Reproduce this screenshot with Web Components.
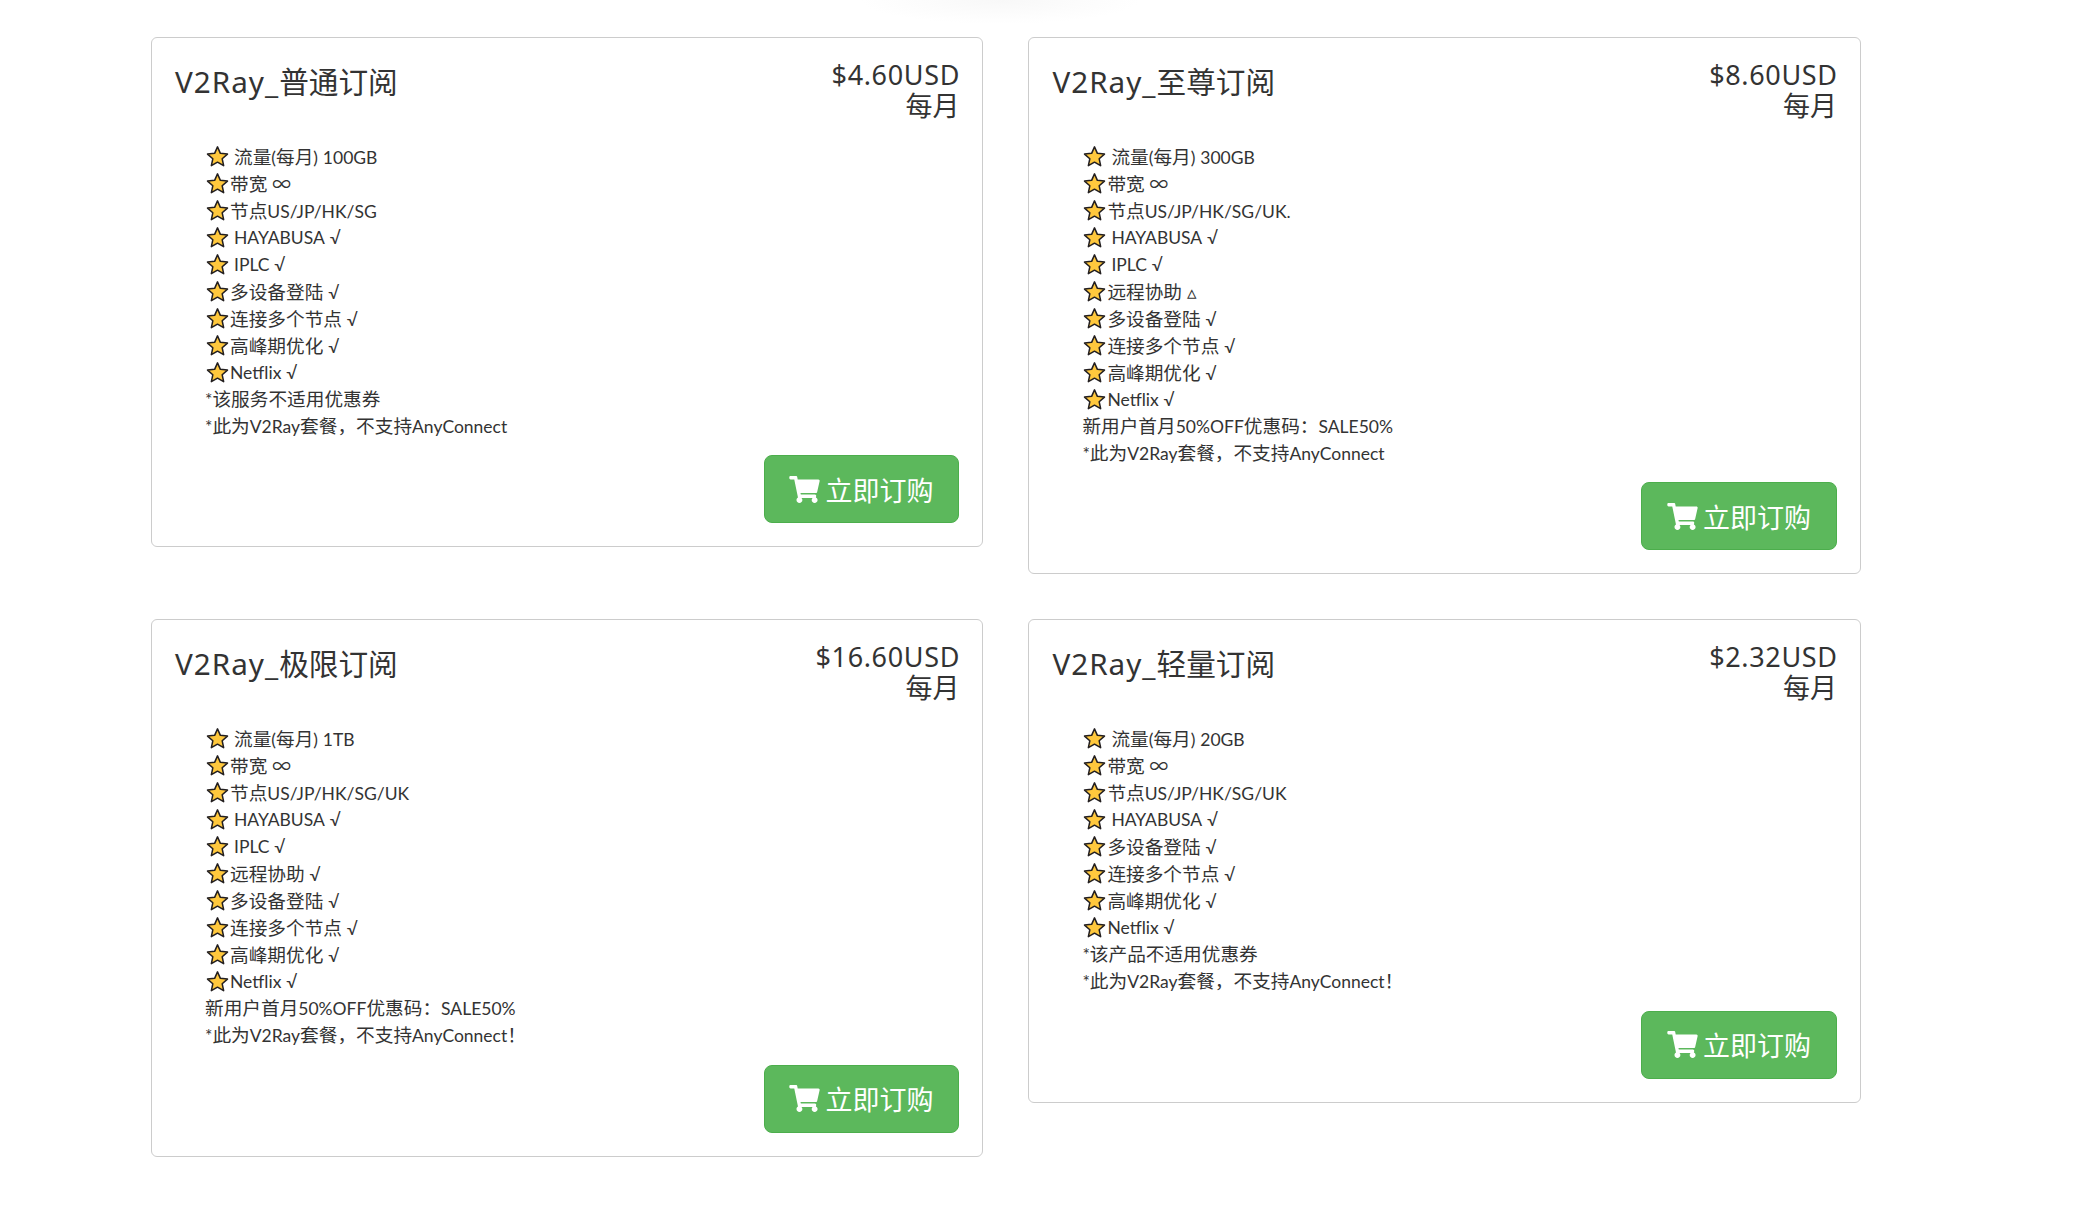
<!DOCTYPE html>
<html lang="zh">
<head>
<meta charset="utf-8">
<title>V2Ray</title>
<style>
  body {
    margin: 0;
    background: #fff;
    font-family: "Noto Sans", "Noto Sans CJK SC", sans-serif;
    color: #333;
  }
</style>
</head>
<body>
<plan-grid>
  <plan-card name="普通订阅" price="$4.60USD">
    <plan-feature spaced>流量(每月) 100GB</plan-feature>
    <plan-feature>带宽 ∞</plan-feature>
    <plan-feature>节点US/JP/HK/SG</plan-feature>
    <plan-feature spaced>HAYABUSA √</plan-feature>
    <plan-feature spaced>IPLC √</plan-feature>
    <plan-feature>多设备登陆 √</plan-feature>
    <plan-feature>连接多个节点 √</plan-feature>
    <plan-feature>高峰期优化 √</plan-feature>
    <plan-feature>Netflix √</plan-feature>
    <plan-note>*该服务不适用优惠券</plan-note>
    <plan-note>*此为V2Ray套餐，不支持AnyConnect</plan-note>
  </plan-card>
  <plan-card name="至尊订阅" price="$8.60USD">
    <plan-feature spaced>流量(每月) 300GB</plan-feature>
    <plan-feature>带宽 ∞</plan-feature>
    <plan-feature>节点US/JP/HK/SG/UK.</plan-feature>
    <plan-feature spaced>HAYABUSA √</plan-feature>
    <plan-feature spaced>IPLC √</plan-feature>
    <plan-feature>远程协助 ▵</plan-feature>
    <plan-feature>多设备登陆 √</plan-feature>
    <plan-feature>连接多个节点 √</plan-feature>
    <plan-feature>高峰期优化 √</plan-feature>
    <plan-feature>Netflix √</plan-feature>
    <plan-note>新用户首月50%OFF优惠码：SALE50%</plan-note>
    <plan-note>*此为V2Ray套餐，不支持AnyConnect</plan-note>
  </plan-card>
  <plan-card name="极限订阅" price="$16.60USD">
    <plan-feature spaced>流量(每月) 1TB</plan-feature>
    <plan-feature>带宽 ∞</plan-feature>
    <plan-feature>节点US/JP/HK/SG/UK</plan-feature>
    <plan-feature spaced>HAYABUSA √</plan-feature>
    <plan-feature spaced>IPLC √</plan-feature>
    <plan-feature>远程协助 √</plan-feature>
    <plan-feature>多设备登陆 √</plan-feature>
    <plan-feature>连接多个节点 √</plan-feature>
    <plan-feature>高峰期优化 √</plan-feature>
    <plan-feature>Netflix √</plan-feature>
    <plan-note>新用户首月50%OFF优惠码：SALE50%</plan-note>
    <plan-note>*此为V2Ray套餐，不支持AnyConnect！</plan-note>
  </plan-card>
  <plan-card name="轻量订阅" price="$2.32USD">
    <plan-feature spaced>流量(每月) 20GB</plan-feature>
    <plan-feature>带宽 ∞</plan-feature>
    <plan-feature>节点US/JP/HK/SG/UK</plan-feature>
    <plan-feature spaced>HAYABUSA √</plan-feature>
    <plan-feature>多设备登陆 √</plan-feature>
    <plan-feature>连接多个节点 √</plan-feature>
    <plan-feature>高峰期优化 √</plan-feature>
    <plan-feature>Netflix √</plan-feature>
    <plan-note>*该产品不适用优惠券</plan-note>
    <plan-note>*此为V2Ray套餐，不支持AnyConnect！</plan-note>
  </plan-card>
</plan-grid>

<script>
// latin runs in the list are set smaller than the chinese around them
const listTextStyles = `
  ::slotted(.en) {
    font-family: Lato, sans-serif;
    font-size: 17.5px;
  }
`

function wrapLatin(host) {
  const holder = document.createElement('div')
  holder.innerHTML = host.innerHTML.replace(/[\x21-\x7e√]+/g, m => `<span class="en">${m}</span>`)
  host.replaceChildren(...holder.childNodes)
}

class PlanGrid extends HTMLElement {
  constructor() {
    super()
    this.attachShadow({ mode: 'open' }).innerHTML = `
      <style>
        :host {
          display: grid;
          position: relative;
          grid-template-columns: 832.4px 832.6px;
          column-gap: 45px;
          row-gap: 45px;
          align-items: start;
          padding: 37px 0 68px 151px;
        }

        /* faint shadow of the bar above, cut off by the top edge */
        :host::before {
          content: '';
          position: absolute;
          top: 0;
          left: 860px;
          width: 280px;
          height: 24px;
          background: radial-gradient(ellipse 140px 24px at 50% 0, #f8f8f8, #fff);
        }
      </style>
      <slot></slot>
    `
  }
}

class PlanCard extends HTMLElement {
  constructor() {
    super()
    this.attachShadow({ mode: 'open' })
  }

  connectedCallback() {
    this.render()
  }

  render() {
    this.shadowRoot.innerHTML = `
      <style>
        :host {
          display: block;
          position: relative;
          box-sizing: border-box;
          border: 1px solid #ccc;
          border-radius: 6px;
          padding: 23px;
        }

        header {
          display: flex;
          justify-content: space-between;
          align-items: flex-start;
          height: 80.5px;
        }

        h2 {
          margin: 0;
          font-size: 29.67px;
          font-weight: 400;
          line-height: 41px;
        }

        h2 span {
          letter-spacing: 1px;
        }

        .price {
          margin-top: -2px;
          font-size: 27px;
          line-height: 31px;
          text-align: right;
        }

        .amount {
          margin-right: -0.65px;
          letter-spacing: 0.65px;
        }

        .list {
          padding-left: 30px;
        }

        footer {
          display: flex;
          justify-content: flex-end;
          margin-top: 16.3px;
        }
      </style>
      <header>
        <h2><span>V2Ray_</span>${this.getAttribute('name')}</h2>
        <div class="price">
          <div class="amount">${this.getAttribute('price')}</div>
          <div>每月</div>
        </div>
      </header>
      <div class="list"><slot></slot></div>
      <footer><order-button>立即订购</order-button></footer>
    `
  }
}

class PlanFeature extends HTMLElement {
  constructor() {
    super()
    this.attachShadow({ mode: 'open' }).innerHTML = `
      <style>
        :host {
          display: flex;
          align-items: center;
          height: 27.05px;
          font-size: 18.67px;
          white-space: pre;
        }

        :host([spaced]) span {
          padding-left: 4px;
        }

        svg {
          width: 23px;
          height: 23px;
          margin: 2px 1px 0;
          flex: none;
        }

        ${listTextStyles}
      </style>
      <svg viewBox="0 0 24 24">
        <path d="M12 2 L15 8.7 L22.4 9.5 L16.9 14.4 L18.4 21.6 L12 17.9 L5.6 21.6 L7.1 14.4 L1.6 9.5 L9 8.7 Z"
          fill="#ffc83d" stroke="#231f20" stroke-width="1.6" stroke-linejoin="round"/>
      </svg>
      <span><slot></slot></span>
    `
  }

  connectedCallback() {
    wrapLatin(this)
  }
}

class PlanNote extends HTMLElement {
  constructor() {
    super()
    this.attachShadow({ mode: 'open' }).innerHTML = `
      <style>
        :host {
          display: block;
          height: 27.05px;
          line-height: 27px;
          font-size: 18.67px;
        }

        ${listTextStyles}
      </style>
      <slot></slot>
    `
  }

  connectedCallback() {
    wrapLatin(this)
  }
}

class OrderButton extends HTMLElement {
  constructor() {
    super()
    this.attachShadow({ mode: 'open' }).innerHTML = `
      <style>
        :host {
          display: inline-flex;
          align-items: center;
          justify-content: center;
          gap: 5px;
          box-sizing: border-box;
          width: 195.8px;
          height: 68px;
          background: #5cb85c;
          border: 1px solid #4cae4c;
          border-radius: 8px;
          color: #fff;
          font-size: 27px;
        }

        svg {
          width: 31px;
          height: 27px;
          fill: #fff;
        }
      </style>
      <svg viewBox="0 0 576 512">
        <path d="M528.12 301.319l47.273-208C578.806 78.301 567.391 64 551.99 64H159.208l-9.166-44.81C147.758 8.021 137.93 0 126.529 0H24C10.745 0 0 10.745 0 24v16c0 13.255 10.745 24 24 24h69.883l70.248 343.435C147.325 417.1 136 435.222 136 456c0 30.928 25.072 56 56 56s56-25.072 56-56c0-15.674-6.447-29.835-16.824-40h209.647C430.447 426.165 424 440.326 424 456c0 30.928 25.072 56 56 56s56-25.072 56-56c0-22.172-12.888-41.332-31.579-50.405l5.517-24.276c3.413-15.018-8.002-29.319-23.403-29.319H218.117l-6.545-32h293.145c11.206 0 20.92-7.754 23.403-18.681z"/>
      </svg>
      <span><slot></slot></span>
    `
  }
}

customElements.define('plan-grid', PlanGrid)
customElements.define('plan-card', PlanCard)
customElements.define('plan-feature', PlanFeature)
customElements.define('plan-note', PlanNote)
customElements.define('order-button', OrderButton)
</script>
</body>
</html>
